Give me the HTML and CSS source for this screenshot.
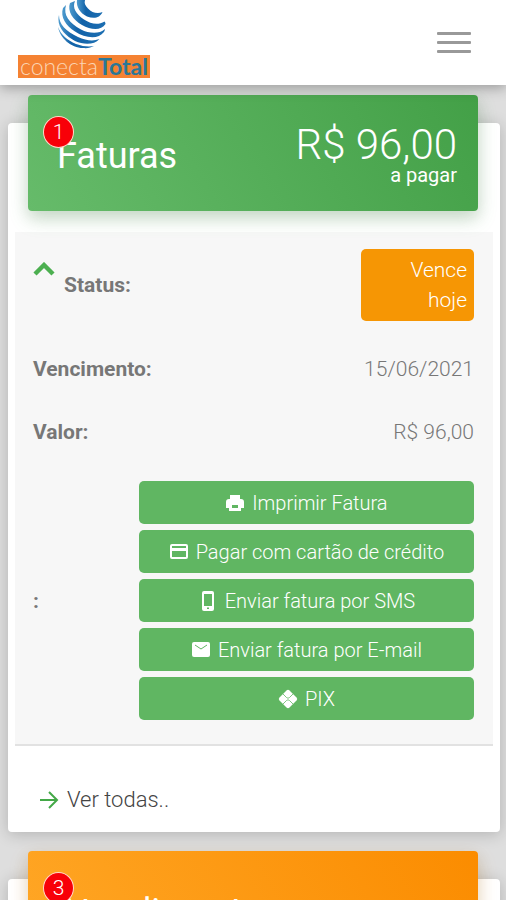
FILE: index.html
```html
<!DOCTYPE html>
<html lang="pt-BR">
<head>
<meta charset="utf-8">
<meta name="viewport" content="width=device-width, initial-scale=1">
<title>Conecta Total</title>
<link rel="stylesheet" href="styles.css">
</head>
<body>
<header class="topbar">
  <a class="logo" href="#">
    <svg class="globe" viewBox="0 0 50 49" aria-hidden="true">
      <defs>
        <linearGradient id="blue" x1="0" x2="1"><stop offset="0" stop-color="#4d9bce"/><stop offset=".35" stop-color="#1262a8"/><stop offset="1" stop-color="#1d6fb2"/></linearGradient>
      </defs>
      <g fill="url(#blue)">
        <path d="M20 0C19 7 23 13 30 16.500C37 19 43 18 45.500 12C41 14 35 13 31 8.500C28 5.500 27 3 28 0Z"/>
        <path d="M13 3C10 11 16 20 25 25C34 30 44 31 48.500 24C48.500 23 48 22 47.500 21.500C41 25.500 34 24 27 19.500C19 14 15 8 18 1Z"/>
        <path d="M6 8C3 17 9 26 18 31.500C28 38 41 40 47 32C47.500 31 48 30 48 29C42 34.500 32 33.500 24 29.500C12 23 6 15 9 5Z"/>
        <path d="M2 15C-1 26 8 36 18 41C27 45 37 45 42.500 39C36 41.500 29 40.500 21 37C9 31 2 25 2 15Z"/>
        <path d="M1 27C3 38 14 48 26 48C31 48.500 34 47.500 37 46C32 47 26 46.500 19 44C10 40 4 35 1 27Z"/>
      </g>
    </svg>
    <span class="wordmark">conecta<b>Total</b></span>
  </a>
  <button class="menu" type="button" aria-label="Menu"><span></span><span></span><span></span></button>
</header>
<main>
  <section class="card">
    <div class="banner green">
      <h2>Faturas</h2>
      <span class="badge">1</span>
      <p class="total"><strong>R$ 96,00</strong><span>a pagar</span></p>
    </div>
    <div class="invoice">
      <div class="row status">
        <button class="toggle" type="button" aria-label="Recolher"><svg viewBox="0 0 22 14"><path d="M2 12L11 3L20 12" fill="none" stroke="#4caf50" stroke-width="4.400"/></svg></button>
        <span class="label">Status:</span>
        <span class="tag">Vence hoje</span>
      </div>
      <div class="row"><span class="label">Vencimento:</span><span class="value">15/06/2021</span></div>
      <div class="row"><span class="label">Valor:</span><span class="value">R$ 96,00</span></div>
      <div class="row options">
        <span class="label">:</span>
        <div class="actions">
          <button type="button"><svg viewBox="0 0 20 20"><path d="M5 2h10v4H5zM4 6h12a3 3 0 0 1 3 3v6h-3v3H4v-3H1V9a3 3 0 0 1 3-3zm3 6v3h6v-3z" fill-rule="evenodd"/></svg>Imprimir Fatura</button>
          <button type="button"><svg viewBox="0 0 20 20"><path d="M3 2h14a2 2 0 0 1 2 2v11a2 2 0 0 1-2 2H3a2 2 0 0 1-2-2V4a2 2 0 0 1 2-2zm0 2v2h14V4zm0 5v6h14V9z" fill-rule="evenodd"/></svg>Pagar com cartão de crédito</button>
          <button type="button"><svg viewBox="0 0 20 20"><path d="M6 0h8a2 2 0 0 1 2 2v16a2 2 0 0 1-2 2H6a2 2 0 0 1-2-2V2a2 2 0 0 1 2-2zm0 3v12h8V3zm3 13.500v1.500h2v-1.500z" fill-rule="evenodd"/></svg>Enviar fatura por SMS</button>
          <button type="button"><svg viewBox="0 0 20 20"><rect x="1" y="2" width="18" height="15" rx="2"/><path d="M4 5l6 4 6-4" fill="none" stroke="#60b662" stroke-width="1"/></svg>Enviar fatura por E-mail</button>
          <button type="button"><svg viewBox="0 0 20 20"><path d="M8.500 1.500Q10 0 11.500 1.500L18.500 8.500Q20 10 18.500 11.500L11.500 18.500Q10 20 8.500 18.500L1.500 11.500Q0 10 1.500 8.500Z"/><path d="M5 5L8.500 8.500Q10 10 11.500 8.500L15 5M5 15L8.500 11.500Q10 10 11.500 11.500L15 15" fill="none" stroke="#60b662" stroke-width=".8"/></svg>PIX</button>
        </div>
      </div>
    </div>
    <a class="more" href="#"><svg viewBox="0 0 20 20"><path d="M1 10H18M10 2L18 10L10 18" fill="none" stroke="#43a847" stroke-width="2"/></svg>Ver todas..</a>
  </section>
  <section class="card">
    <div class="banner orange">
      <h2>Atendimento</h2>
      <span class="badge">3</span>
    </div>
  </section>
</main>
</body>
</html>
```
FILE: styles.css
```css
* { box-sizing: border-box; }
body {
  margin: 0;
  height: 100vh;
  display: flex;
  flex-direction: column;
  overflow: hidden;
  background: #dedede;
  font-family: Roboto, "Liberation Sans", sans-serif;
  font-weight: 300;
  font-size: 21px;
  line-height: 30px;
  color: #777;
}
button { font: inherit; border: 0; padding: 0; cursor: pointer; }
a { text-decoration: none; color: inherit; }
h2, p { margin: 0; }

.topbar {
  flex: none;
  position: relative;
  z-index: 1;
  display: flex;
  justify-content: space-between;
  align-items: center;
  height: 85px;
  padding: 0 35px 0 18px;
  background: #fff;
  box-shadow: 0 3px 12px rgba(0, 0, 0, .3);
}
.logo { align-self: flex-start; display: flex; flex-direction: column; align-items: center; gap: 6px; }
.globe { width: 50px; height: 49px; margin-right: 4px; }
.wordmark {
  padding: 0 2px;
  background: #f58232;
  color: #fbd5b5;
  font: 300 23px/23px Lato, sans-serif;
}
.wordmark b { color: #2a7797; font-weight: 700; }
.menu { display: flex; flex-direction: column; gap: 6px; width: 34px; background: none; }
.menu span { height: 3px; background: #999; border-radius: 1px; }

main { flex: 1; min-height: 0; overflow: hidden; padding: 38px 6px 0 8px; }
.card {
  margin-bottom: 47px;
  padding-bottom: 17px;
  background: #fff;
  border-radius: 4px;
  box-shadow: 0 2px 16px rgba(0, 0, 0, .2);
}
.banner {
  position: relative;
  top: -28px;
  display: flex;
  justify-content: space-between;
  height: 116px;
  margin: 0 22px -7px 20px;
  padding: 30px 21px 0 29px;
  border-radius: 4px;
  color: #fff;
}
.green { background: linear-gradient(60deg, #66bb6a, #43a047); box-shadow: 0 8px 20px rgba(76, 175, 80, .2), 0 6px 16px rgba(0, 0, 0, .12); }
.orange { background: linear-gradient(60deg, #ffa726, #fb8c00); box-shadow: 0 8px 20px rgba(255, 152, 0, .2), 0 6px 16px rgba(0, 0, 0, .12); }
.banner h2 { font-size: 36px; font-weight: 400; line-height: 62px; }
.badge {
  position: absolute;
  left: 15px;
  top: 21px;
  width: 31px;
  height: 32px;
  border: 1px solid #ffd9c8;
  border-radius: 50%;
  background: #f80008;
  text-align: center;
  font-weight: 300;
}
.total { display: flex; flex-direction: column; text-align: right; line-height: 20px; }
.total strong { font-size: 42px; font-weight: 300; line-height: 40px; }
.total span { font-size: 20px; font-weight: 400; }

.invoice {
  margin: 0 7px;
  padding: 17px 19px 24px 18px;
  background: #f7f7f7;
  border-bottom: 2px solid #e2e2e2;
}
.row { display: flex; justify-content: space-between; align-items: center; margin-bottom: 33px; }
.label { font-weight: 700; }
.status { height: 72px; }
.status .label { flex: 1; margin-left: 9px; }
.toggle { align-self: flex-start; margin-top: 13px; width: 22px; height: 14px; background: none; display: flex; }
.toggle svg { width: 22px; height: 14px; }
.tag {
  width: 113px;
  padding: 6px 7px 6px 40px;
  border-radius: 5px;
  background: #f69604;
  color: #fff;
  text-align: right;
}
.options { margin: 34px 0 0; }
.row:nth-child(3) { margin-bottom: 0; }
.actions { display: flex; flex-direction: column; gap: 6px; width: 76%; }
.actions button {
  display: flex;
  align-items: center;
  justify-content: center;
  gap: 7px;
  height: 43px;
  border-radius: 5px;
  background: #60b662;
  color: #fff;
  font-size: 20px;
}
.actions svg { width: 20px; height: 20px; fill: #fff; }
.more { display: flex; align-items: center; gap: 8px; margin: 39px 31px 0; color: #444; font-size: 22px; }
.more svg { width: 20px; height: 20px; }
```
